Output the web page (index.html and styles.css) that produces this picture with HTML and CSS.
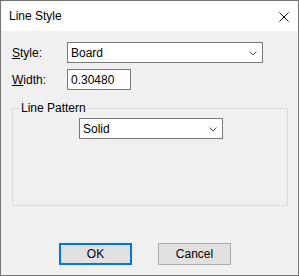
FILE: index.html
```html
<!DOCTYPE html>
<html lang="en">
<head>
    <meta charset="UTF-8">
    <title>Line Style</title>
    <link rel="stylesheet" href="styles.css">
</head>
<body>
    <div class="window">
        <div class="titlebar">
            <span class="title">Line Style</span>
            <svg class="close" width="10" height="10" viewBox="0 0 10 10">
                <path d="M0.5 0.5 L9.5 9.5 M9.5 0.5 L0.5 9.5" stroke="#111" stroke-width="1" fill="none"/>
            </svg>
        </div>
        <div class="content">
            <div class="row">
                <label class="field-label"><u>S</u>tyle:</label>
                <div class="combo combo-style">
                    <span>Board</span>
                    <svg class="chevron" width="8" height="5" viewBox="0 0 8 5">
                        <path d="M0.5 0.5 L4 4 L7.5 0.5" stroke="#606060" stroke-width="1" fill="none"/>
                    </svg>
                </div>
            </div>
            <div class="row">
                <label class="field-label"><u>W</u>idth:</label>
                <div class="textbox">0.30480</div>
            </div>
            <fieldset class="group">
                <legend>Line Pattern</legend>
                <div class="combo combo-pattern">
                    <span>Solid</span>
                    <svg class="chevron" width="8" height="5" viewBox="0 0 8 5">
                        <path d="M0.5 0.5 L4 4 L7.5 0.5" stroke="#606060" stroke-width="1" fill="none"/>
                    </svg>
                </div>
            </fieldset>
            <div class="buttons">
                <button class="btn btn-default">OK</button>
                <button class="btn">Cancel</button>
            </div>
        </div>
    </div>
</body>
</html>
```

FILE: styles.css
```css
body {
    margin: 0;
    font-family: "Liberation Sans", Arial, sans-serif;
    font-size: 12px;
    color: #000;
}
.window {
    width: 299px;
    height: 276px;
    box-sizing: border-box;
    border: 1px solid #747474;
    background-color: #f0f0f0;
    display: flex;
    flex-direction: column;
}
.titlebar {
    height: 30px;
    background-color: #fff;
    display: flex;
    align-items: center;
    justify-content: space-between;
    padding: 0 9px 0 8px;
}
.title {
    font-size: 12px;
}
.close {
    margin-top: 1px;
}
.content {
    flex: 1;
    padding: 11px 10px 0 11px;
    display: flex;
    flex-direction: column;
}
.row {
    display: flex;
    align-items: center;
    height: 21px;
    margin-bottom: 6px;
}
.field-label {
    width: 55px;
}
.combo {
    height: 21px;
    box-sizing: border-box;
    border: 1px solid #7a7a7a;
    background-color: #fff;
    display: flex;
    align-items: center;
    justify-content: space-between;
    padding: 0 5px 0 3px;
}
.combo-style {
    width: 196px;
}
.combo-pattern {
    width: 144px;
}
.chevron {
    margin-top: 1px;
}
.textbox {
    width: 64px;
    height: 21px;
    box-sizing: border-box;
    border: 1px solid #7a7a7a;
    background-color: #fff;
    padding: 0 3px;
    display: flex;
    align-items: center;
}
.group {
    margin: 5px 0 0 0;
    padding: 3px 0 0 66px;
    height: 105px;
    box-sizing: border-box;
    border: 1px solid #dcdcdc;
}
.group legend {
    padding: 0 2px;
    margin-left: -60px;
}
.buttons {
    display: flex;
    gap: 26px;
    margin-top: 37px;
    padding-left: 47px;
}
.btn {
    width: 73px;
    height: 22px;
    box-sizing: border-box;
    font-family: "Liberation Sans", Arial, sans-serif;
    font-size: 12px;
    color: #000;
    background-color: #e1e1e1;
    border: 1px solid #adadad;
    padding: 0;
}
.btn-default {
    border: 2px solid #0078d7;
}
```
